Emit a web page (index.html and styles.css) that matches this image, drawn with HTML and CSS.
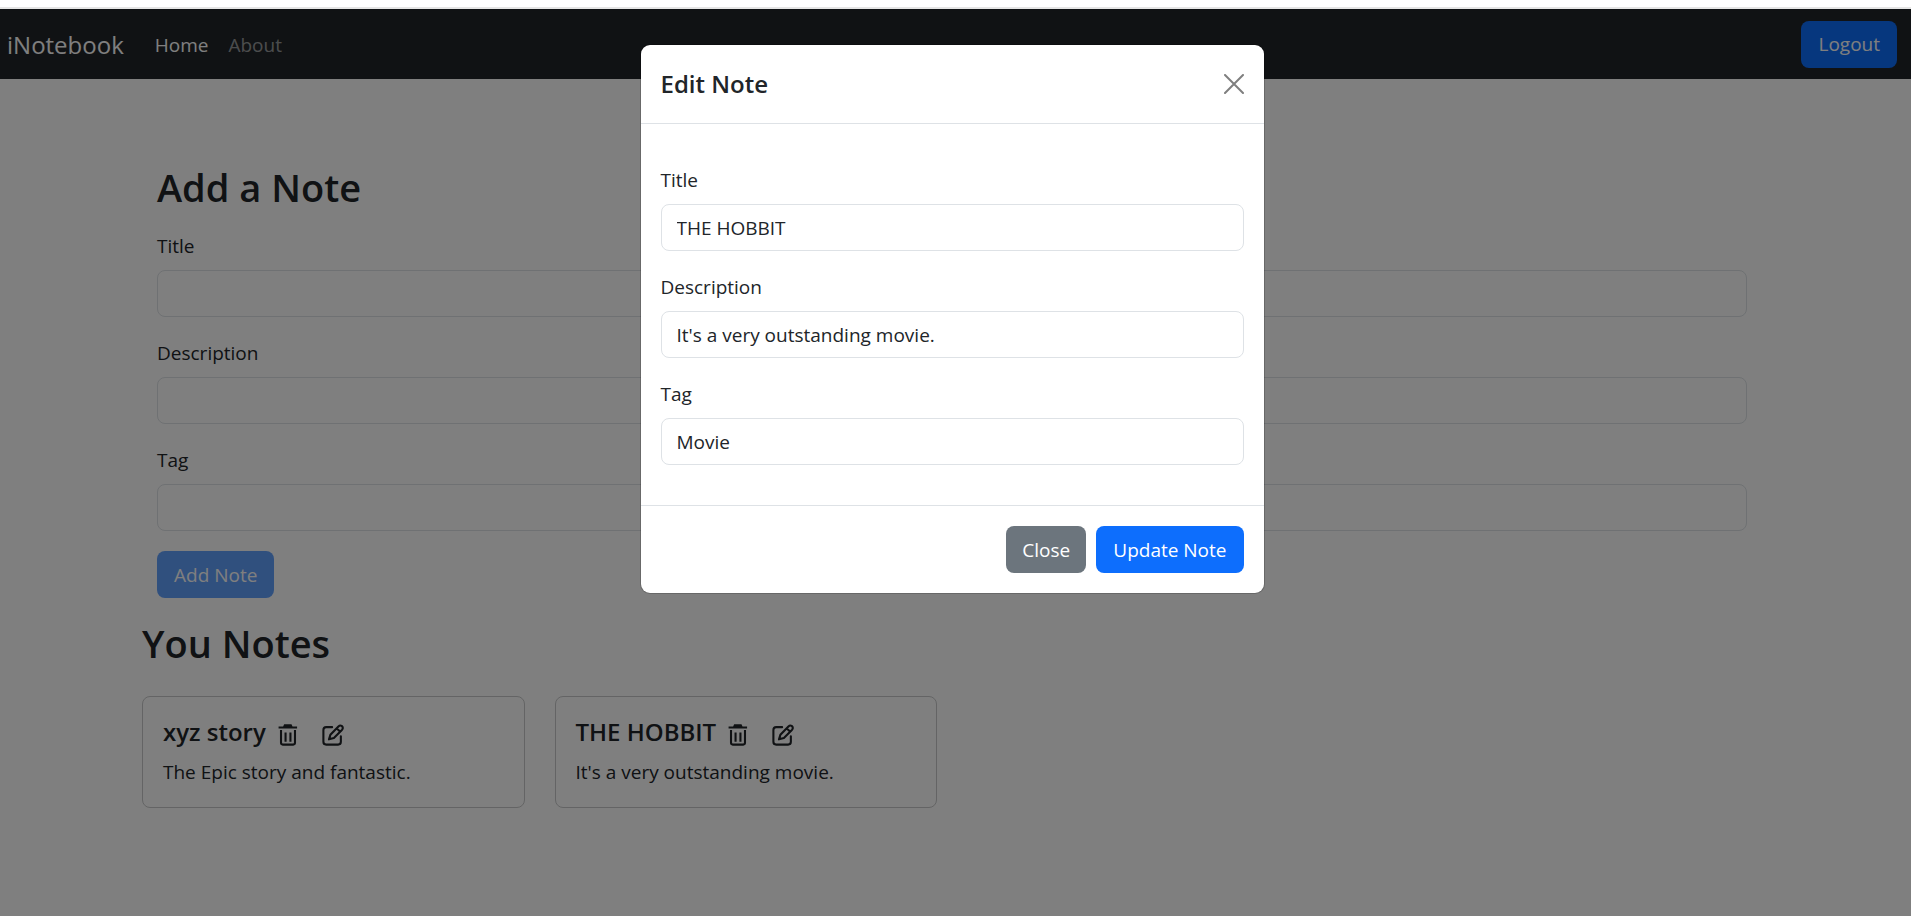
FILE: index.html
```html
<!DOCTYPE html>
<html lang="en">
<head>
<meta charset="utf-8">
<title>iNotebook</title>
<link rel="stylesheet" href="styles.css">
</head>
<body>
<svg class="sprite" aria-hidden="true">
  <symbol id="icon-trash" viewBox="0 0 54 63">
    <path d="M13 7 L16 1 H37 L40 7 H53 V13 H0 V7 Z" fill="currentColor"/>
    <path d="M7 17 V54 Q7 59 12 59 H42 Q47 59 47 54 V17" fill="none" stroke="currentColor" stroke-width="6"/>
    <path d="M20 24 V51 M34 24 V51" fill="none" stroke="currentColor" stroke-width="6"/>
  </symbol>
  <symbol id="icon-edit" viewBox="0 0 63 63">
    <path d="M29 9 H12 Q4 9 4 17 V51 Q4 59 12 59 H46 Q54 59 54 51 V35" fill="none" stroke="currentColor" stroke-width="6" stroke-linecap="round"/>
    <path d="M20 44 L24 31 L47 7 Q52 2 57 6 Q62 11 57 17 L34 40 Z M42 12 L52 22" fill="none" stroke="currentColor" stroke-width="6" stroke-linejoin="round"/>
  </symbol>
</svg>
<div class="strip"></div>
<div class="app">
  <nav class="navbar">
    <a class="brand" href="#">iNotebook</a>
    <a class="nav-link active" href="#">Home</a>
    <a class="nav-link" href="#">About</a>
    <button class="btn btn-primary logout" type="button">Logout</button>
  </nav>
  <main class="page">
    <div class="container">
      <section class="add-note">
        <h2>Add a Note</h2>
        <form class="form">
          <div class="field"><label for="title">Title</label><input id="title" type="text"></div>
          <div class="field"><label for="description">Description</label><input id="description" type="text"></div>
          <div class="field"><label for="tag">Tag</label><input id="tag" type="text"></div>
          <button class="btn btn-primary" type="submit" disabled>Add Note</button>
        </form>
      </section>
      <section class="notes">
        <h2>You Notes</h2>
        <div class="note-grid">
          <article class="card">
            <div class="card-head">
              <h5>xyz story</h5>
              <button class="icon-btn" type="button" aria-label="Delete note"><svg><use href="#icon-trash"/></svg></button>
              <button class="icon-btn edit" type="button" aria-label="Edit note"><svg><use href="#icon-edit"/></svg></button>
            </div>
            <p>The Epic story and fantastic.</p>
          </article>
          <article class="card">
            <div class="card-head">
              <h5>THE HOBBIT</h5>
              <button class="icon-btn" type="button" aria-label="Delete note"><svg><use href="#icon-trash"/></svg></button>
              <button class="icon-btn edit" type="button" aria-label="Edit note"><svg><use href="#icon-edit"/></svg></button>
            </div>
            <p>It's a very outstanding movie.</p>
          </article>
        </div>
      </section>
    </div>
  </main>
  <div class="backdrop">
    <div class="modal" role="dialog" aria-modal="true" aria-labelledby="modal-title">
      <header class="modal-header">
        <h5 id="modal-title">Edit Note</h5>
        <button class="close" type="button" aria-label="Close"><svg viewBox="0 0 20 20"><path d="M1 1 L19 19 M19 1 L1 19" fill="none" stroke="currentColor" stroke-width="2" stroke-linecap="round"/></svg></button>
      </header>
      <form class="modal-body" id="edit-form">
        <div class="field"><label for="etitle">Title</label><input id="etitle" type="text" value="THE HOBBIT"></div>
        <div class="field"><label for="edescription">Description</label><input id="edescription" type="text" value="It's a very outstanding movie."></div>
        <div class="field"><label for="etag">Tag</label><input id="etag" type="text" value="Movie"></div>
      </form>
      <footer class="modal-footer">
        <button class="btn btn-secondary" type="button">Close</button>
        <button class="btn btn-primary" type="submit" form="edit-form">Update Note</button>
      </footer>
    </div>
  </div>
</div>
</body>
</html>
```
FILE: styles.css
```css
* { box-sizing: border-box; }
body {
  margin: 0;
  min-height: 100vh;
  display: flex;
  flex-direction: column;
  background: #fff;
  color: #212529;
  font-family: "Segoe UI", "Open Sans", "Noto Sans", sans-serif;
  font-size: 19px;
  line-height: 30px;
}
h2, h5, p { margin: 0; }
h2 { font-size: 38px; line-height: 48px; font-weight: 600; }
h5 { font-size: 24px; line-height: 30px; font-weight: 600; }
button, input { font: inherit; }
.sprite { display: none; }
.strip { height: 9px; border-bottom: 2px solid #e5e5e5; }
.app { position: relative; flex: 1; }

.navbar {
  display: flex;
  align-items: center;
  height: 70px;
  padding: 0 14px 0 7px;
  background: #212529;
}
.brand, .nav-link { padding-top: 2px; text-decoration: none; }
.brand { color: #fff; font-size: 24px; margin-right: 31px; }
.nav-link { color: rgba(255, 255, 255, .55); margin-right: 20px; }
.nav-link.active { color: #fff; }
.logout { margin-left: auto; }

.btn {
  height: 47px;
  padding: 0 16px;
  border: 0;
  border-radius: 8px;
  color: #fff;
}
.btn-primary { padding: 0 17px; background: #0d6efd; }
.btn-secondary { background: #6c757d; }
.btn:disabled { opacity: .65; }

.page { padding: 84px 7px 0 0; }
.container { max-width: 1650px; margin: 0 auto; padding: 0 15px; }
.add-note { padding: 0 15px; }
.form { padding-top: 19px; }
.field { margin-bottom: 20px; }
.field label { display: block; line-height: 32px; margin-bottom: 8px; }
.field input {
  display: block;
  width: 100%;
  height: 47px;
  padding: 0 15px;
  border: 1px solid #dee2e6;
  border-radius: 8px;
  background: #fff;
  color: #212529;
}

.notes { padding-top: 21px; }
.note-grid { display: grid; grid-template-columns: repeat(4, 1fr); gap: 30px; padding-top: 29px; }
.card { padding: 20px; border: 1px solid #c8c9ca; border-radius: 8px; }
.card-head { display: flex; align-items: center; margin-bottom: 10px; }
.icon-btn {
  width: 20px;
  height: 22px;
  margin: 6px 0 0 12px;
  padding: 0;
  border: 0;
  background: none;
  color: inherit;
}
.icon-btn.edit { width: 22px; margin-left: 24px; }
.icon-btn svg { display: block; width: 100%; height: 100%; }

.backdrop {
  position: absolute;
  inset: 0;
  display: flex;
  align-items: flex-start;
  justify-content: center;
  padding: 36px 7px 0 0;
  background: rgba(0, 0, 0, .5);
}
.modal {
  width: 623px;
  background: #fff;
  border-radius: 9px;
  box-shadow: 0 0 0 1px rgba(0, 0, 0, .18);
}
.modal-header {
  display: flex;
  align-items: center;
  justify-content: space-between;
  height: 79px;
  padding: 0 20px;
  border-bottom: 1px solid #dee2e6;
}
.close { width: 20px; height: 20px; padding: 0; border: 0; background: none; color: #7f7f7f; }
.close svg { display: block; }
.modal-body { padding: 40px 20px 20px; }
.modal-footer {
  display: flex;
  justify-content: flex-end;
  gap: 10px;
  padding: 20px;
  border-top: 1px solid #dee2e6;
}
```
